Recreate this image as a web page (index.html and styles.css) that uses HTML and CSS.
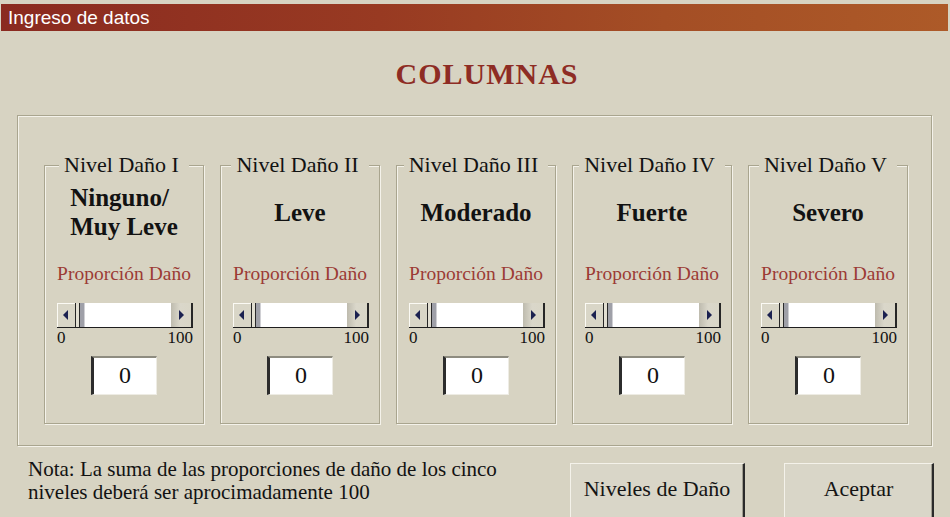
FILE: index.html
```html
<!DOCTYPE html>
<html lang="es">
<head>
<meta charset="utf-8">
<title>Ingreso de datos</title>
<link rel="stylesheet" href="styles.css">
</head>
<body>
<div class="titlebar">Ingreso de datos</div>
<h1 class="heading">COLUMNAS</h1>
<div class="groupbox">
  <div class="level">
    <div class="legend">Nivel Daño I</div>
    <div class="level-name"><span>Ninguno/<br>Muy Leve</span></div>
    <div class="prop-label">Proporción Daño</div>
    <div class="scrollbar">
      <div class="sb-btn sb-left"><svg width="5" height="10" viewBox="0 0 5 10"><polygon points="5,0 0,5 5,10" fill="#1b2150"/></svg></div>
      <div class="sb-thumb"></div>
      <div class="sb-track"></div>
      <div class="sb-btn sb-right"><svg width="5" height="10" viewBox="0 0 5 10"><polygon points="0,0 5,5 0,10" fill="#1b2150"/></svg></div>
    </div>
    <div class="sb-scale"><span>0</span><span>100</span></div>
    <div class="value">0</div>
  </div>
  <div class="level">
    <div class="legend">Nivel Daño II</div>
    <div class="level-name"><span>Leve</span></div>
    <div class="prop-label">Proporción Daño</div>
    <div class="scrollbar">
      <div class="sb-btn sb-left"><svg width="5" height="10" viewBox="0 0 5 10"><polygon points="5,0 0,5 5,10" fill="#1b2150"/></svg></div>
      <div class="sb-thumb"></div>
      <div class="sb-track"></div>
      <div class="sb-btn sb-right"><svg width="5" height="10" viewBox="0 0 5 10"><polygon points="0,0 5,5 0,10" fill="#1b2150"/></svg></div>
    </div>
    <div class="sb-scale"><span>0</span><span>100</span></div>
    <div class="value">0</div>
  </div>
  <div class="level">
    <div class="legend">Nivel Daño III</div>
    <div class="level-name"><span>Moderado</span></div>
    <div class="prop-label">Proporción Daño</div>
    <div class="scrollbar">
      <div class="sb-btn sb-left"><svg width="5" height="10" viewBox="0 0 5 10"><polygon points="5,0 0,5 5,10" fill="#1b2150"/></svg></div>
      <div class="sb-thumb"></div>
      <div class="sb-track"></div>
      <div class="sb-btn sb-right"><svg width="5" height="10" viewBox="0 0 5 10"><polygon points="0,0 5,5 0,10" fill="#1b2150"/></svg></div>
    </div>
    <div class="sb-scale"><span>0</span><span>100</span></div>
    <div class="value">0</div>
  </div>
  <div class="level">
    <div class="legend">Nivel Daño IV</div>
    <div class="level-name"><span>Fuerte</span></div>
    <div class="prop-label">Proporción Daño</div>
    <div class="scrollbar">
      <div class="sb-btn sb-left"><svg width="5" height="10" viewBox="0 0 5 10"><polygon points="5,0 0,5 5,10" fill="#1b2150"/></svg></div>
      <div class="sb-thumb"></div>
      <div class="sb-track"></div>
      <div class="sb-btn sb-right"><svg width="5" height="10" viewBox="0 0 5 10"><polygon points="0,0 5,5 0,10" fill="#1b2150"/></svg></div>
    </div>
    <div class="sb-scale"><span>0</span><span>100</span></div>
    <div class="value">0</div>
  </div>
  <div class="level">
    <div class="legend">Nivel Daño V</div>
    <div class="level-name"><span>Severo</span></div>
    <div class="prop-label">Proporción Daño</div>
    <div class="scrollbar">
      <div class="sb-btn sb-left"><svg width="5" height="10" viewBox="0 0 5 10"><polygon points="5,0 0,5 5,10" fill="#1b2150"/></svg></div>
      <div class="sb-thumb"></div>
      <div class="sb-track"></div>
      <div class="sb-btn sb-right"><svg width="5" height="10" viewBox="0 0 5 10"><polygon points="0,0 5,5 0,10" fill="#1b2150"/></svg></div>
    </div>
    <div class="sb-scale"><span>0</span><span>100</span></div>
    <div class="value">0</div>
  </div>
</div>
<div class="footer">
  <p class="note">Nota: La suma de las proporciones de daño de los cinco<br>niveles deberá ser aprocimadamente 100</p>
  <div class="buttons">
    <button class="btn btn-wide">Niveles de Daño</button>
    <button class="btn btn-ok">Aceptar</button>
  </div>
</div>
</body>
</html>
```

FILE: styles.css
```css
html, body {
  margin: 0;
}
body {
  width: 950px;
  height: 517px;
  box-sizing: border-box;
  padding-top: 4px;
  overflow: hidden;
  background: #d7d3c2;
  color: #121212;
  font-family: "Liberation Serif", "Times New Roman", serif;
}
.titlebar {
  height: 27px;
  margin: 0 2px 0 1px;
  padding-left: 7px;
  background: linear-gradient(to right, #8a2a20 0%, #983a22 40%, #a44e25 70%, #ad5a28 100%);
  color: #fff;
  font: 19px/27px "Liberation Sans", Arial, sans-serif;
}
.heading {
  margin: 0;
  height: 84px;
  box-sizing: border-box;
  padding: 28px 0 0 24px;
  font: bold 30px/30px "Liberation Serif", serif;
  letter-spacing: 1px;
  color: #8e2c24;
  text-align: center;
}
.groupbox {
  margin: 0 18px 0 17px;
  border: 1px solid #a9a58f;
  box-shadow: inset 1px 1px 0 #f4f2ea, 1px 1px 0 #f4f2ea;
  display: grid;
  grid-template-columns: repeat(5, 1fr);
  gap: 16px;
  padding: 49px 23px 21px 26px;
}
.level {
  border: 1px solid #a9a58f;
  box-shadow: inset 1px 1px 0 #f4f2ea, 1px 1px 0 #f4f2ea;
  display: flex;
  flex-direction: column;
  align-items: center;
  padding-bottom: 28px;
  min-width: 0;
}
.legend {
  margin-top: -12px;
  height: 22px;
  font-size: 22px;
  line-height: 22px;
  padding: 0 10px 0 5px;
  background: #d7d3c2;
  white-space: nowrap;
}
.level-name {
  height: 72px;
  display: flex;
  align-items: center;
  justify-content: center;
  font-weight: bold;
  font-size: 25px;
  line-height: 29px;
}
.level-name span {
  text-align: left;
}
.prop-label {
  margin-top: 15px;
  font-size: 19.5px;
  line-height: 22px;
  color: #9c3b35;
  white-space: nowrap;
}
.scrollbar {
  margin: 18px 10px 0 12px;
  align-self: stretch;
  height: 25px;
  box-sizing: border-box;
  display: flex;
  border-bottom: 1px solid #1e1e1e;
}
.sb-btn {
  display: flex;
  align-items: center;
  justify-content: center;
}
.sb-left {
  width: 18px;
  background: #d9d6c7;
  box-shadow: inset 1px 1px 0 #fbfaf4;
  border-right: 1px solid #262626;
}
.sb-left svg {
  margin-right: 2px;
}
.sb-thumb {
  width: 9px;
  background: linear-gradient(to right, #e2dfd2 0 3px, #2a2a2a 3px 4px, #9fa0a8 4px 8px, #d0d0d4 8px);
}
.sb-track {
  flex: 1;
  background: #fff;
}
.sb-right {
  width: 20px;
  background: linear-gradient(to right, #bebbae, #dad7ca 45%, #d9d6c7);
  border-right: 2px solid #262626;
}
.sb-scale {
  align-self: stretch;
  margin: 2px 10px 0 12px;
  display: flex;
  justify-content: space-between;
  font-size: 17px;
  line-height: 16px;
}
.value {
  margin-top: 10px;
  width: 66px;
  height: 39px;
  box-sizing: border-box;
  background: #fff;
  border-top: 2px solid #8e8c80;
  border-left: 3px solid #2c2c2c;
  border-right: 1px solid #eeece4;
  border-bottom: 1px solid #eeece4;
  font-size: 24px;
  line-height: 35px;
  text-align: center;
}
.footer {
  display: flex;
  align-items: flex-start;
  padding-top: 12px;
}
.note {
  margin: 0 0 0 28px;
  font-size: 21px;
  line-height: 23px;
  white-space: nowrap;
}
.buttons {
  margin: 5px 0 0 auto;
  padding-right: 16px;
  display: flex;
  gap: 39px;
}
.btn {
  height: 60px;
  padding: 0 0 10px;
  font: 22px "Liberation Serif", serif;
  color: #141414;
  background: #d9d6c8;
  border: 0;
  border-top: 1px solid #f4f2ea;
  border-left: 1px solid #f4f2ea;
  border-right: 2px solid #2a2a2a;
  box-shadow: inset -1px 0 0 #a09d90;
}
.btn-wide {
  width: 175px;
}
.btn-ok {
  width: 150px;
}
```
